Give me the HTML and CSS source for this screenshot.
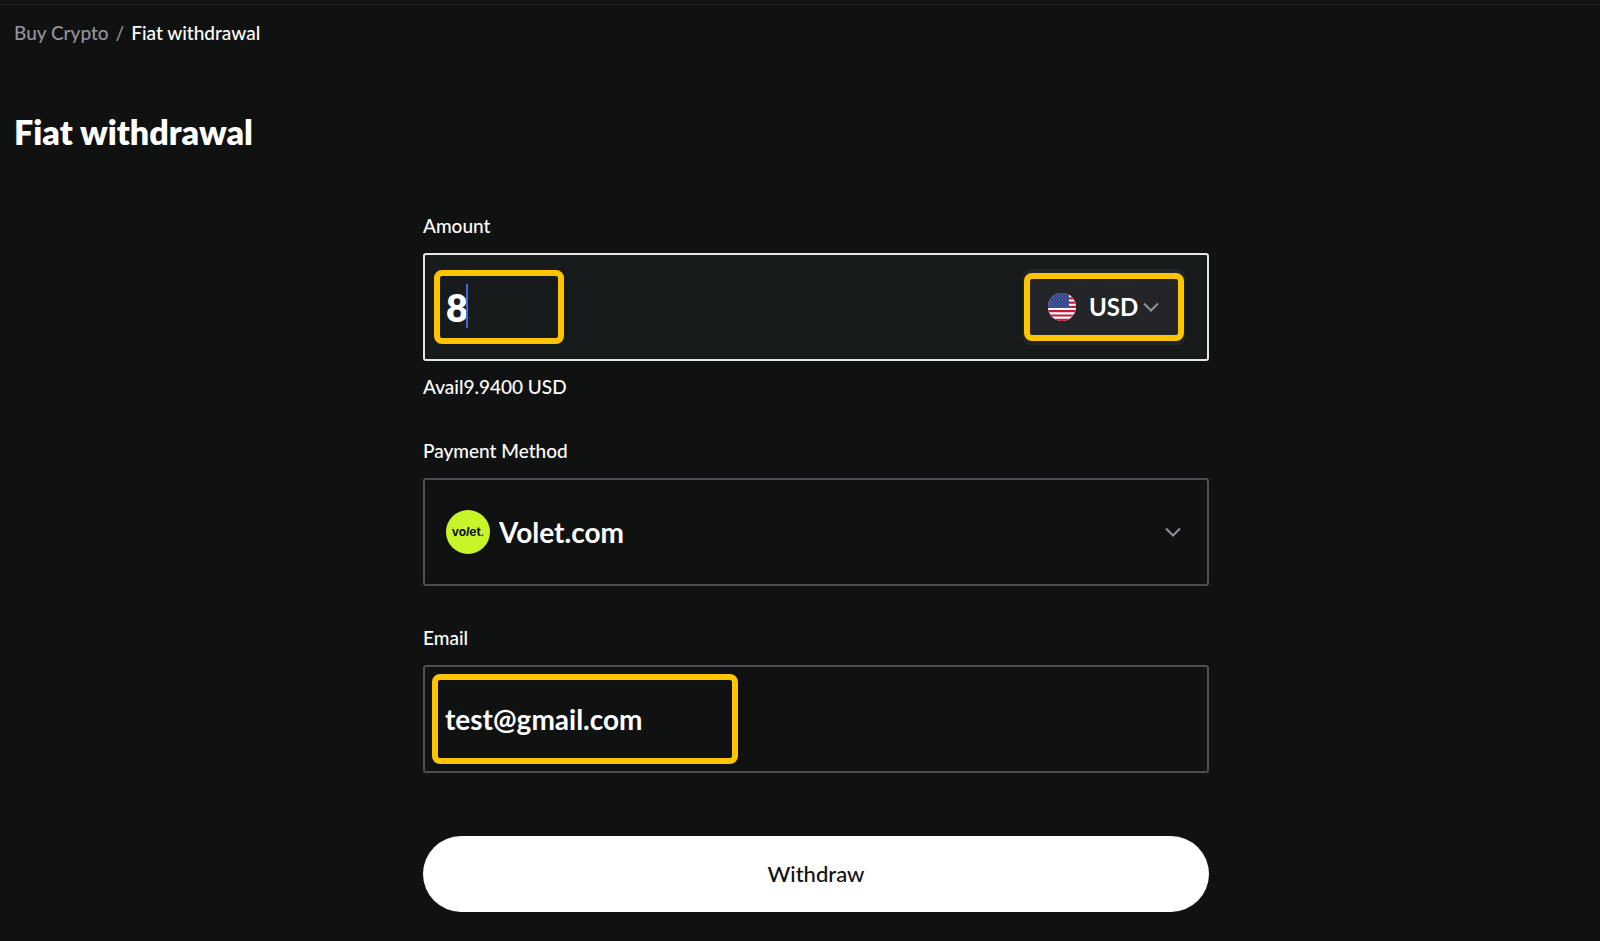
FILE: index.html
```html
<!DOCTYPE html>
<html lang="en">
<head>
  <meta charset="UTF-8">
  <meta name="viewport" content="width=device-width, initial-scale=1.0">
  <title>Fiat withdrawal</title>
  <link rel="stylesheet" href="styles.css">
</head>

<body>
  <header class="top-bar"></header>

  <main class="page">
    <nav class="breadcrumb">
      <a href="#">Buy Crypto</a>
      <span class="separator">/</span>
      <span class="current">Fiat withdrawal</span>
    </nav>

    <h1>Fiat withdrawal</h1>

    <form class="withdraw-form">
      <div class="group">
        <label for="amount">Amount</label>
        <div class="field active">
          <div class="highlight amount-highlight">
            <input type="text" id="amount" inputmode="decimal" value="8">
            <span class="caret"></span>
          </div>
          <div class="currency">
            <div class="highlight currency-highlight">
              <svg class="flag" viewBox="0 0 28 28" aria-hidden="true">
                <defs>
                  <clipPath id="flag-circle"><circle cx="14" cy="14" r="14"/></clipPath>
                  <pattern id="stars" width="3" height="4" patternUnits="userSpaceOnUse">
                    <circle cx="1" cy="1" r="0.5" fill="#a9b4d8"/>
                    <circle cx="2.5" cy="3" r="0.5" fill="#a9b4d8"/>
                  </pattern>
                </defs>
                <g clip-path="url(#flag-circle)">
                  <rect width="28" height="28" fill="#fff"/>
                  <path d="M0 1h28M0 5.3h28M0 9.6h28M0 13.9h28M0 18.2h28M0 22.5h28M0 26.8h28" stroke="#c8193c" stroke-width="2.2"/>
                  <rect width="21" height="15" fill="#2b3f85"/>
                  <rect width="21" height="15" fill="url(#stars)"/>
                </g>
              </svg>
              <select id="currency" aria-label="Currency">
                <option>USD</option>
                <option>EUR</option>
              </select>
              <svg class="chevron" viewBox="0 0 16 10" aria-hidden="true"><path d="M1 1.5l7 7 7-7"/></svg>
            </div>
          </div>
        </div>
        <p class="available">Avail9.9400 USD</p>
      </div>

      <div class="group">
        <label for="method">Payment Method</label>
        <div class="field method">
          <svg class="logo" viewBox="0 0 44 44" aria-hidden="true">
            <circle cx="22" cy="22" r="22" fill="#c8f52a"/>
            <text x="22" y="26" text-anchor="middle">vo<tspan font-style="italic">l</tspan>et<tspan font-weight="400">.</tspan></text>
          </svg>
          <select id="method">
            <option>Volet.com</option>
          </select>
          <svg class="chevron" viewBox="0 0 16 10" aria-hidden="true"><path d="M1 1.5l7 7 7-7"/></svg>
        </div>
      </div>

      <div class="group">
        <label for="email">Email</label>
        <div class="field">
          <div class="highlight email-highlight">
            <input type="email" id="email" value="test@gmail.com">
          </div>
        </div>
      </div>

      <button type="button" class="submit">Withdraw</button>
    </form>
  </main>
</body>
</html>
```
FILE: styles.css
```css
* {
  box-sizing: border-box;
}

body {
  margin: 0;
  background: #101211;
  color: #fff;
  font-family: Lato, "Liberation Sans", sans-serif;
  font-size: 19px;
  font-weight: 500;
  line-height: 24px;
}

.top-bar {
  height: 5px;
  border-bottom: 1px solid #202223;
}

.page {
  padding: 16px 14px 24px;
}

.breadcrumb {
  display: flex;
  gap: 7px;
}

.breadcrumb a,
.separator {
  color: #90939d;
  text-decoration: none;
}

h1 {
  margin: 67px 0 0;
  font-size: 34px;
  font-weight: 800;
  line-height: 40px;
}

.withdraw-form {
  max-width: 818px;
  margin: 62px auto 0;
  padding-left: 32px;
}

.group {
  margin-bottom: 40px;
}

.group label {
  display: block;
  margin-bottom: 15px;
}

.field {
  display: flex;
  align-items: center;
  height: 108px;
  padding: 0 7px;
  border: 2px solid #4c4d55;
  border-radius: 3px;
}

.field.active {
  justify-content: space-between;
  padding: 0 22px 0 9px;
  border-color: #e4e6e6;
  background: #181b1c;
}

.field.method {
  padding: 0 26px 0 21px;
}

.available {
  margin: 14px 0 0;
}

.highlight {
  display: flex;
  align-items: center;
  border: 6px solid #ffc400;
  border-radius: 8px;
}

.amount-highlight {
  position: relative;
  width: 130px;
  height: 74px;
  padding-left: 6px;
}

.currency {
  padding: 4px 1px;
  border-radius: 8px;
  background: #242529;
}

.currency-highlight {
  width: 160px;
  height: 68px;
  padding: 0 19px 0 18px;
}

.email-highlight {
  width: 306px;
  height: 90px;
  padding-left: 7px;
}

input,
select {
  min-width: 0;
  margin: 0;
  padding: 0;
  border: 0;
  outline: 0;
  background: none;
  color: inherit;
  font: inherit;
  appearance: none;
}

input {
  width: 100%;
}

#amount {
  font-size: 38px;
  font-weight: 800;
  line-height: 44px;
}

.caret {
  position: absolute;
  top: 8px;
  left: 26px;
  width: 2px;
  height: 44px;
  background: #4067e0;
}

#currency {
  flex: 1;
  margin-left: 13px;
  font-size: 24px;
  font-weight: 700;
  line-height: 32px;
}

#method,
#email {
  font-size: 28px;
  font-weight: 700;
  line-height: 36px;
}

#method {
  flex: 1;
  margin-left: 9px;
}

.flag {
  flex: none;
  width: 28px;
  height: 28px;
}

.logo {
  flex: none;
  width: 44px;
  height: 44px;
}

.logo text {
  fill: #101211;
  font-family: Inter, sans-serif;
  font-size: 12px;
  font-weight: 700;
}

.chevron {
  flex: none;
  width: 16px;
  height: 10px;
  fill: none;
  stroke: #90939d;
  stroke-width: 2;
}

.submit {
  display: block;
  width: 100%;
  height: 76px;
  margin-top: 63px;
  border: 0;
  border-radius: 38px;
  background: #fff;
  color: #101211;
  font: inherit;
  font-size: 22px;
}
```
